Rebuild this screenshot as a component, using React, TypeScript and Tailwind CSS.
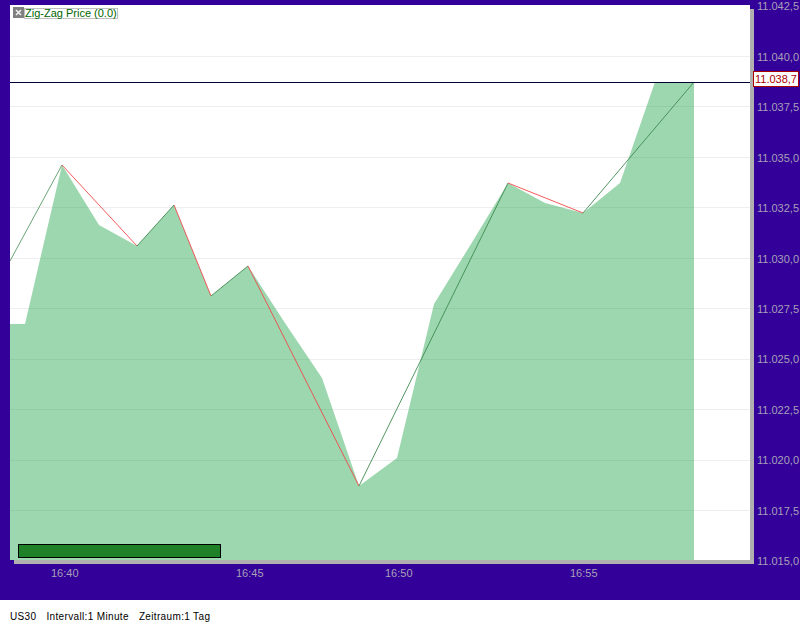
const grid = [56, 106, 157, 207, 258, 308, 359, 409, 460, 510];
const yLabels = ["11.042,5","11.040,0","11.037,5","11.035,0","11.032,5","11.030,0","11.027,5","11.025,0","11.022,5","11.020,0","11.017,5","11.015,0"];
const yTop = [0,51,101,152,202,253,303,353,404,454,505,555];
const xLabels = [["16:40",51],["16:45",236],["16:50",385],["16:55",570]] as const;

function Chart() {
  return (
    <svg width="740" height="555" viewBox="10 5 740 555" className="block">
      <rect x="10" y="5" width="740" height="555" fill="#ffffff" />
      {grid.map((y) => (
        <line key={y} x1="10" x2="750" y1={y + 0.5} y2={y + 0.5} stroke="#eeeeee" />
      ))}
      <polygon
        points="10,324 25,324 62,165 99,225 137,246 174,205 211,296 248,266 285,323 322,378 359,486 397,458 434,304 471,244 508,183 545,203 583,213 620,183 655,82 694,82 694,560 10,560"
        fill="#21a34a"
        fillOpacity="0.44"
      />
      <g fill="none" strokeWidth="0.9">
        <polyline points="10,261 62,165" stroke="#5a9a68" />
        <polyline points="62,165 137,246" stroke="#f04848" />
        <polyline points="137,246 174,205" stroke="#3f8a50" />
        <polyline points="174,205 211,296" stroke="#f04848" />
        <polyline points="211,296 248,266" stroke="#3f8a50" />
        <polyline points="248,266 359,486" stroke="#f04848" />
        <polyline points="359,486 508,183" stroke="#3f8a50" />
        <polyline points="508,183 583,213" stroke="#f04848" />
        <polyline points="583,213 694,82" stroke="#3f8a50" />
      </g>
      <line x1="10" x2="750" y1="82.5" y2="82.5" stroke="#000033" />
    </svg>
  );
}

export default function App() {
  return (
    <div className="w-[800px] h-[625px] overflow-hidden bg-white font-['Liberation_Sans',Arial,sans-serif]">
      <div className="h-[600px] bg-[#330099] pt-[5px] pl-[10px] relative">
        <div className="flex">
          <div className="relative w-[740px] h-[555px] shadow-[4px_4px_0_#b0b0b0]">
            <Chart />
            <div className="absolute left-[3px] top-[2px] flex items-start">
              <div className="w-[11px] h-[11px] bg-[#808080] flex items-center justify-center">
                <svg width="7" height="7" viewBox="0 0 7 7">
                  <path d="M1 1L6 6M6 1L1 6" stroke="#f0f0f0" strokeWidth="1.6" />
                </svg>
              </div>
              <div className="mt-px h-[11px] border border-[#c0c0c0] bg-white text-[11px] leading-[9px] text-[#006600] whitespace-nowrap">
                Zig-Zag Price (0.0)
              </div>
            </div>
            <div className="absolute left-[8px] top-[539px] w-[203px] h-[14px] bg-[#208028] border border-black" />
          </div>
        </div>
        <div className="absolute left-[753px] top-[71px] w-[46px] h-[16px] bg-white border border-[#aa0000] text-[#aa0000] text-[11px] leading-[14px] text-center">
          11.038,7
        </div>
        {yLabels.map((t, i) => (
          <div key={t} style={{ top: yTop[i] }} className="absolute left-[757px] text-[11px] leading-[13px] text-[#a8a0b8] whitespace-nowrap">
            {t}
          </div>
        ))}
        {xLabels.map(([t, x]) => (
          <div key={t} style={{ left: x }} className="absolute top-[567px] text-[11px] leading-[13px] text-[#a8a0b8]">
            {t}
          </div>
        ))}
      </div>
      <div className="h-[25px] flex items-start pt-[11px] pl-[10px] text-[10px] leading-[12px] tracking-[0.35px] text-black whitespace-pre">
        <span>US30</span>
        <span className="ml-[10px]">Intervall:1 Minute</span>
        <span className="ml-[10px]">Zeitraum:1 Tag</span>
      </div>
    </div>
  );
}
